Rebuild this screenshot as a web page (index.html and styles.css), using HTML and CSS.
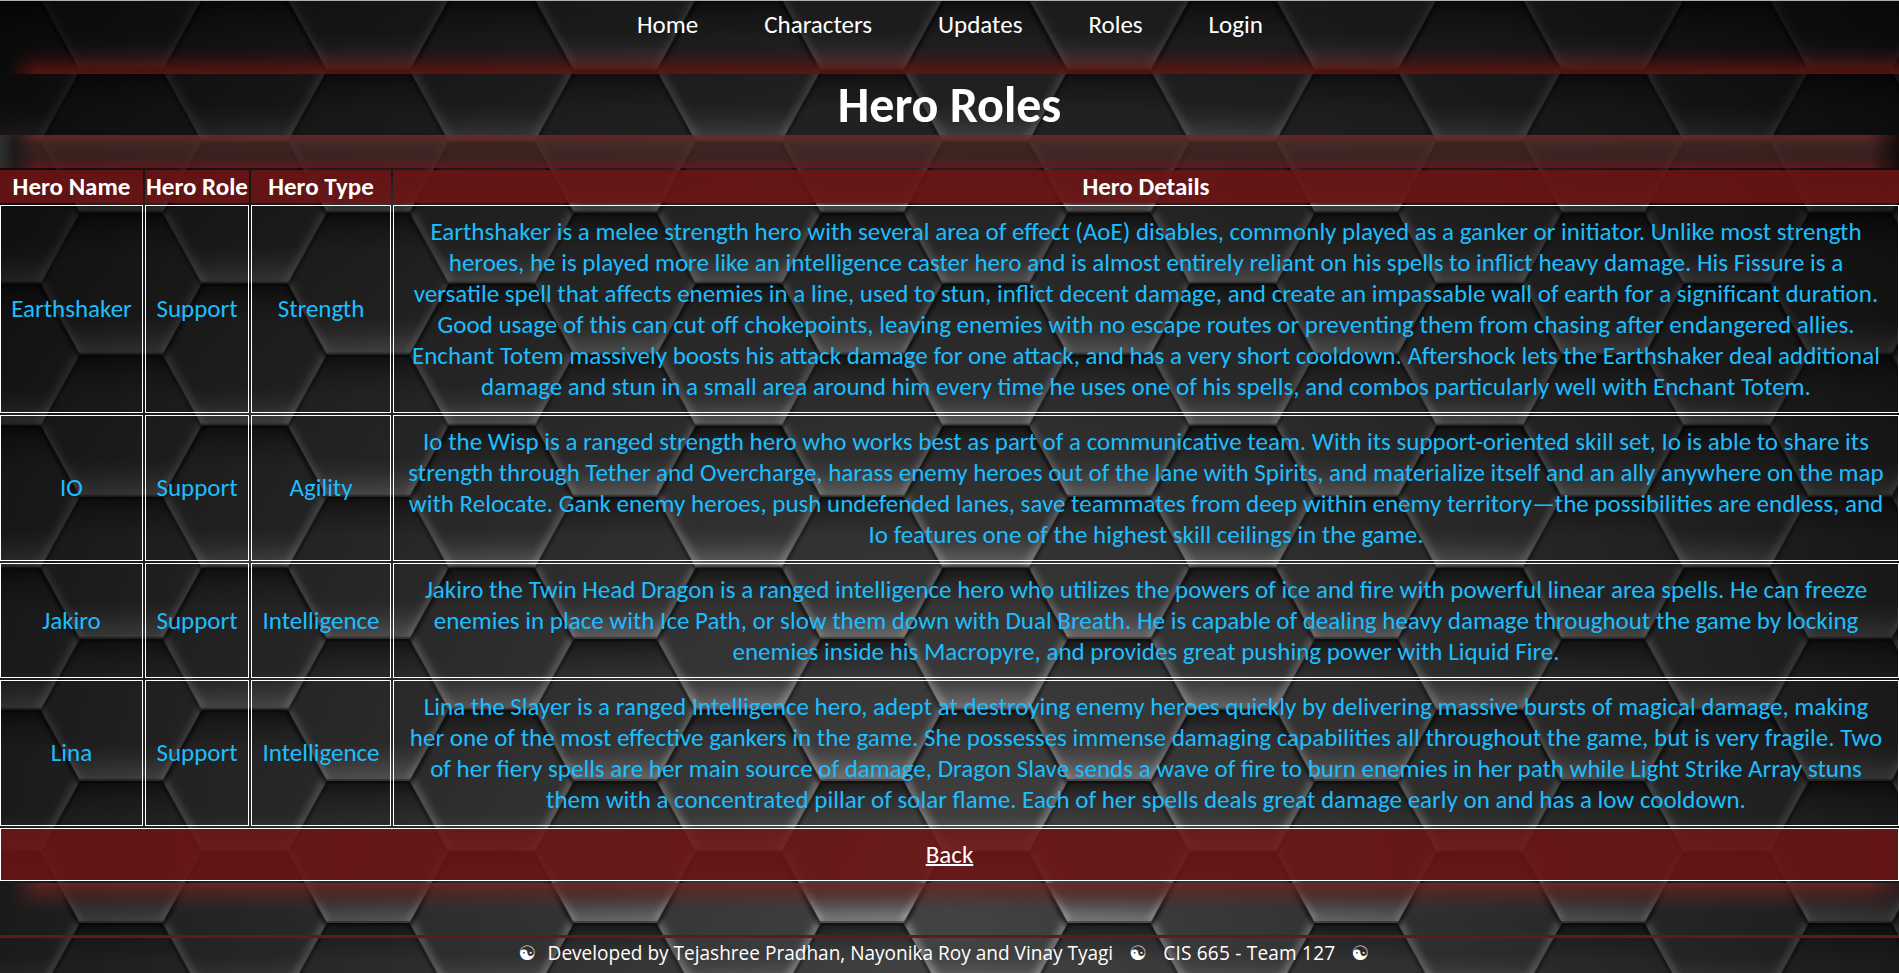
FILE: index.html
```html
<!DOCTYPE html>
<html lang="en">
<head>
<meta charset="utf-8">
<title>Hero Roles</title>
<link rel="stylesheet" href="styles.css">
</head>
<body>
<svg class="backdrop" aria-hidden="true">
  <defs>
    <linearGradient id="top-shade" x1="0" y1="0" x2="0" y2="1">
      <stop offset="0" stop-color="#000" stop-opacity=".56"/>
      <stop offset=".4" stop-color="#000" stop-opacity=".24"/>
      <stop offset="1" stop-color="#000" stop-opacity="0"/>
    </linearGradient>
    <linearGradient id="bottom-shine" x1="0" y1="0" x2="0" y2="1">
      <stop offset="0" stop-color="#fff" stop-opacity="0"/>
      <stop offset=".35" stop-color="#fff" stop-opacity=".08"/>
      <stop offset="1" stop-color="#fff" stop-opacity=".34"/>
    </linearGradient>
    <filter id="soft" x="-20%" y="-20%" width="140%" height="140%"><feGaussianBlur stdDeviation="3.5"/></filter>
    <filter id="softer" x="-20%" y="-20%" width="140%" height="140%"><feGaussianBlur stdDeviation="2"/></filter>
    <clipPath id="hex-clip"><path d="M-43 0H43L82.3 71 43 142.1H-43L-82.3 71Z"/></clipPath>
    <g id="hex" clip-path="url(#hex-clip)">
      <path d="M-43 0H43L82.3 71 43 142.1H-43L-82.3 71Z" fill="#444344"/>
      <rect x="-83" y="0" width="166" height="40" fill="url(#top-shade)"/>
      <rect x="-83" y="104" width="166" height="38.1" fill="url(#bottom-shine)"/>
      <path d="M-84 68L-43 142.1M84 68L43 142.1" stroke="#fff" stroke-opacity=".33" stroke-width="10" fill="none" filter="url(#soft)"/>
      <path d="M-84 74L-43 0M84 74L43 0" stroke="#000" stroke-opacity=".7" stroke-width="6" fill="none" filter="url(#softer)"/>
      <path d="M-50 0.5H50" stroke="#000" stroke-opacity=".4" stroke-width="4"/>
      <path d="M-45 142.1H45" stroke="#000" stroke-opacity=".35" stroke-width="4"/>
    </g>
    <pattern id="honeycomb" x="-2.3" y="70.4" width="247" height="142.1" patternUnits="userSpaceOnUse">
      <use href="#hex" x="123.5" y="0"/>
      <use href="#hex" x="0" y="-71.05"/>
      <use href="#hex" x="0" y="71.05"/>
      <use href="#hex" x="247" y="-71.05"/>
      <use href="#hex" x="247" y="71.05"/>
    </pattern>
    <radialGradient id="vignette" gradientUnits="userSpaceOnUse" cx="950" cy="920" r="1330">
      <stop offset="0" stop-color="#000" stop-opacity="0"/>
      <stop offset=".34" stop-color="#000" stop-opacity=".29"/>
      <stop offset=".64" stop-color="#000" stop-opacity=".54"/>
      <stop offset=".79" stop-color="#000" stop-opacity=".68"/>
      <stop offset="1" stop-color="#000" stop-opacity=".88"/>
    </radialGradient>
  </defs>
  <rect width="100%" height="100%" fill="url(#honeycomb)"/>
  <rect width="100%" height="100%" fill="url(#vignette)"/>
</svg>
<div class="page">
  <nav class="nav">
    <a href="#">Home</a><a href="#">Characters</a><a href="#">Updates</a><a href="#">Roles</a><a href="#">Login</a>
  </nav>
  <h1 class="title">Hero Roles</h1>
  <div class="glow-band"></div>
  <table class="roles">
    <colgroup><col class="c-name"><col class="c-role"><col class="c-type"><col></colgroup>
    <tr><th>Hero Name</th><th>Hero Role</th><th>Hero Type</th><th>Hero Details</th></tr>
    <tr><td>Earthshaker</td><td>Support</td><td>Strength</td><td>Earthshaker is a melee strength hero with several area of effect (AoE) disables, commonly played as a ganker or initiator. Unlike most strength heroes, he is played more like an intelligence caster hero and is almost entirely reliant on his spells to inflict heavy damage. His Fissure is a versatile spell that affects enemies in a line, used to stun, inflict decent damage, and create an impassable wall of earth for a significant duration. Good usage of this can cut off chokepoints, leaving enemies with no escape routes or preventing them from chasing after endangered allies. Enchant Totem massively boosts his attack damage for one attack, and has a very short cooldown. Aftershock lets the Earthshaker deal additional damage and stun in a small area around him every time he uses one of his spells, and combos particularly well with Enchant Totem.</td></tr>
    <tr><td>IO</td><td>Support</td><td>Agility</td><td>Io the Wisp is a ranged strength hero who works best as part of a communicative team. With its support-oriented skill set, Io is able to share its strength through Tether and Overcharge, harass enemy heroes out of the lane with Spirits, and materialize itself and an ally anywhere on the map with Relocate. Gank enemy heroes, push undefended lanes, save teammates from deep within enemy territory—the possibilities are endless, and Io features one of the highest skill ceilings in the game.</td></tr>
    <tr><td>Jakiro</td><td>Support</td><td>Intelligence</td><td>Jakiro the Twin Head Dragon is a ranged intelligence hero who utilizes the powers of ice and fire with powerful linear area spells. He can freeze enemies in place with Ice Path, or slow them down with Dual Breath. He is capable of dealing heavy damage throughout the game by locking enemies inside his Macropyre, and provides great pushing power with Liquid Fire.</td></tr>
    <tr><td>Lina</td><td>Support</td><td>Intelligence</td><td>Lina the Slayer is a ranged Intelligence hero, adept at destroying enemy heroes quickly by delivering massive bursts of magical damage, making her one of the most effective gankers in the game. She possesses immense damaging capabilities all throughout the game, but is very fragile. Two of her fiery spells are her main source of damage, Dragon Slave sends a wave of fire to burn enemies in her path while Light Strike Array stuns them with a concentrated pillar of solar flame. Each of her spells deals great damage early on and has a low cooldown.</td></tr>
    <tr><td class="back" colspan="4"><a href="#">Back</a></td></tr>
  </table>
  <div class="glow-end"></div>
  <footer class="footer"><span class="yin">☯</span><span class="authors">Developed by Tejashree Pradhan, Nayonika Roy and Vinay Tyagi</span><span class="yin">☯</span><span class="team">CIS 665 - Team 127</span><span class="yin">☯</span></footer>
</div>
</body>
</html>
```
FILE: styles.css
```css
* { box-sizing: border-box; }
html, body { height: 100%; }
body {
  margin: 0;
  overflow: hidden;
  background: #111;
  color: #fff;
  font: 25px/31px Calibri, Carlito, Lato, sans-serif;
}
.backdrop {
  position: absolute;
  inset: 0;
  width: 100%;
  height: 100%;
}
.page {
  position: relative;
  height: 973px;
  overflow: hidden;
  display: flex;
  flex-direction: column;
  border-top: 1px solid #a9b0ad;
}
.nav {
  position: relative;
  flex: none;
  height: 73px;
  padding-top: 8px;
  padding-left: 1px;
  display: flex;
  justify-content: center;
  gap: 66px;
}
.nav::after {
  content: "";
  position: absolute;
  inset: auto 0 0 0;
  height: 28px;
  background: linear-gradient(to top, rgba(105, 18, 18, .85), rgba(105, 18, 18, .6) 25%, rgba(100, 25, 25, .2) 60%, rgba(100, 30, 30, 0));
  -webkit-mask-image: linear-gradient(to right, transparent 8px, #000 36px);
  mask-image: linear-gradient(to right, transparent 8px, #000 36px);
}
.nav a { color: #fff; text-decoration: none; }
.title {
  flex: none;
  margin: 0;
  height: 61px;
  font-size: 50px;
  line-height: 61px;
  text-align: center;
}
.glow-band {
  flex: none;
  height: 33px;
  background:
    linear-gradient(to right, rgba(46, 50, 48, .95), rgba(24, 24, 24, .8) 14px, rgba(30, 20, 20, 0) 36px),
    linear-gradient(to left, rgba(14, 8, 8, .85), rgba(25, 10, 10, 0) 30px),
    linear-gradient(to bottom, rgba(112, 40, 40, .85), rgba(84, 44, 42, .7) 30%, rgba(72, 42, 38, .68) 62%, rgba(104, 26, 26, .85));
}
.roles {
  flex: none;
  width: 1903px;
  margin-left: -2px;
  table-layout: fixed;
  border-collapse: separate;
  border-spacing: 2px;
}
.c-name { width: 143px; }
.c-role { width: 104px; }
.c-type { width: 140px; }
.roles th {
  padding: 1px;
  background: rgba(112, 20, 20, .86);
  white-space: nowrap;
}
.roles td {
  padding: 10px;
  border: 1px solid #fff;
  color: #1cbeff;
  text-align: center;
  vertical-align: middle;
}
.roles td:not(:last-child) { padding-bottom: 11px; }
.roles .back { background: rgba(112, 20, 20, .86); }
.roles .back a { color: #fff; text-decoration-thickness: 2px; }
.glow-end {
  flex: none;
  height: 52px;
  background: linear-gradient(to bottom, rgba(112, 38, 38, .85), rgba(104, 34, 34, .62) 16%, rgba(90, 40, 40, .25) 38%, rgba(80, 40, 40, 0) 60%);
  -webkit-mask-image: linear-gradient(to right, transparent 8px, #000 40px, #000 1868px, rgba(0, 0, 0, .35));
  mask-image: linear-gradient(to right, transparent 8px, #000 40px, #000 1868px, rgba(0, 0, 0, .35));
}
.footer {
  flex: none;
  height: 38px;
  padding-right: 11px;
  border-top: 3px solid #691617;
  display: flex;
  justify-content: center;
  font: 19.05px/30px "Open Sans", "Noto Sans", sans-serif;
  white-space: nowrap;
}
.yin {
  width: 18px;
  font: bold 20px/30px "DejaVu Sans", sans-serif;
  text-align: center;
}
.authors { margin: 0 16px 0 11px; }
.team { margin: 0 16px; letter-spacing: .22px; }
```
